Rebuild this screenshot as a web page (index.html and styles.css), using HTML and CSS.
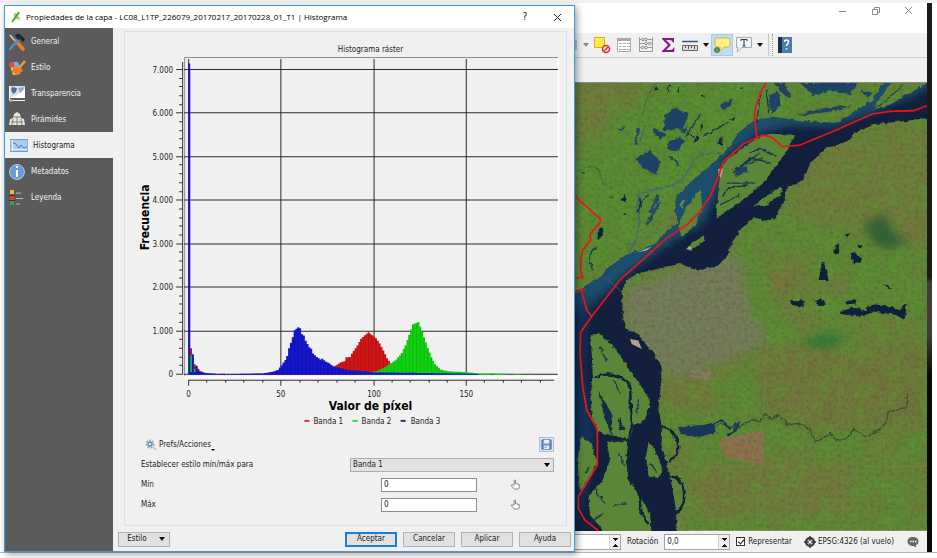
FILE: index.html
```html
<!DOCTYPE html>
<html lang="es">
<head>
<meta charset="utf-8">
<title>Propiedades de la capa</title>
<link rel="stylesheet" href="styles.css">
</head>
<body>
<div class="desktop">
  <section class="dialog" aria-label="Propiedades de la capa">
    <header class="dialog-title">
      <svg class="app-icon" viewBox="0 0 10 12"><path d="M1 11L4 6L3 1.500L6 3L9 1L7 5L9 8L5 8Z" fill="#8fc657"/><path d="M1 11L8 1" stroke="#4d9b2c" stroke-width="1.500"/><path d="M2 4L4 6M6 7l3 3" stroke="#d9d65b"/></svg>
      <h1>Propiedades de la capa - LC08_L1TP_226079_20170217_20170228_01_T1 | Histograma</h1>
      <button class="title-button" aria-label="Contexto">?</button>
      <button class="title-button" aria-label="Cerrar"><svg viewBox="0 0 9 9"><path d="M1 1l7 7M8 1l-7 7" stroke="#222" fill="none"/></svg></button>
    </header>
    <div class="dialog-body">
      <nav class="sidebar">
        <a href="#general"><svg viewBox="0 0 18 18"><path d="M2 2l5 6" stroke="#c9d4dd" stroke-width="1.500"/><path d="M8 8l7 8" stroke="#e8812b" stroke-width="3.500" stroke-linecap="round"/><path d="M12 5L2 16" stroke="#4e8ccb" stroke-width="2.500" stroke-linecap="round"/><path d="M7 2q4-3 7 1l3 3-2 3-3-3-2 1z" fill="#222a31"/></svg>General</a>
        <a href="#estilo"><svg viewBox="0 0 18 18"><path d="M1 4l9-1 2 12-7 1z" fill="#e9d46c"/><path d="M1 4l5-1 1 5-5 1z" fill="#d94d3d"/><path d="M6 3l4 0 1 5-4 0z" fill="#7faede"/><path d="M5 9l7-2 3 5-6 4-5-3z" fill="#e87e25"/><path d="M11 9l6-7" stroke="#f0a12e" stroke-width="2.500"/></svg>Estilo</a>
        <a href="#transparencia"><svg viewBox="0 0 18 18"><path d="M1 1h16v12H1z" fill="#d4e2ef"/><path d="M4 2l5 1-1 4-3 2-2-4z" fill="#506c8c"/><path d="M10 3l6-1v6l-4 0z" fill="#8eabc8"/><path d="M3 12q8-1 14-9v10H3z" fill="#fff"/><path d="M1.500 1v14M1 15.500h16" stroke="#f0f3f6"/><circle cx="3" cy="15.500" r="1.500" fill="#86aed6"/></svg>Transparencia</a>
        <a href="#piramides"><svg viewBox="0 0 18 18"><path d="M6 3l3-2 3 2 1 5H5zM2 8l3-1h8l3 1 1 6H1z" fill="#e3e3df"/><path d="M5 8l-1 6M9 5v9M13 8l1 6M3 11h12M6 6h6" stroke="#85857f" fill="none"/></svg>Pirámides</a>
        <a href="#histograma" class="current" aria-current="page"><svg viewBox="0 0 18 18"><path d="M0 2.500h18v12H0z" fill="#a9cdea" stroke="#6d9fc8"/><path d="M2.500 3v11M1 12.500h16" stroke="#e3f0fa" fill="none"/><path d="M3 6l3 1 3 4 2-3 3 3 3-1" stroke="#4d80ab" fill="none"/></svg>Histograma</a>
        <a href="#metadatos"><svg viewBox="0 0 18 18"><circle cx="9" cy="9" r="7.500" fill="#6c9cd2" stroke="#adc9e8"/><path d="M9 7v7M9 3v2" stroke="#fff" stroke-width="2"/></svg>Metadatos</a>
        <a href="#leyenda"><svg viewBox="0 0 18 18"><path d="M2 1h4v4H2z" fill="#f4b72c"/><path d="M2 7h4v4H2z" fill="#df3f25"/><path d="M2 12h4v4H2z" fill="#36a25a"/><path d="M1 6.500h6M1 11.500h6" stroke="#333"/><path d="M8 4h5M8 9.500h7M8 15h4" stroke="#b7b7b7"/></svg>Leyenda</a>
      </nav>
      <main class="content">
        <div class="panel">
          <svg class="chart" viewBox="125 31 440 402" role="img" aria-label="Histograma ráster">
            <g id="grid"></g>
            <g id="bars"></g>
            <g id="axes"></g>
            <text x="370" y="51" class="tick middle">Histograma ráster</text>
            <text x="370" y="408" class="axis-title middle">Valor de píxel</text>
            <text transform="translate(149 216) rotate(-90)" class="axis-title middle">Frecuencia</text>
            <path d="M304 419h5" stroke="#d2383c" stroke-width="2"/><text x="313" y="422" class="tick">Banda 1</text>
            <path d="M352 419h5" stroke="#38d848" stroke-width="2"/><text x="361" y="422" class="tick">Banda 2</text>
            <path d="M400 419h5" stroke="#2c2ca6" stroke-width="2"/><text x="410" y="422" class="tick">Banda 3</text>
          </svg>
          <div class="form">
            <div class="row">
              <button class="prefs"><svg viewBox="0 0 12 12"><circle cx="5" cy="5" r="3.500" fill="#dce8f3" stroke="#8fabc6" stroke-width="2" stroke-dasharray="2 1"/><circle cx="5" cy="5" r="2" fill="none" stroke="#426c96"/><path d="M8 8l3 3" stroke="#c3ccd4" stroke-width="2"/></svg>Prefs/Acciones<span class="corner"></span></button>
              <button class="save" aria-label="Guardar"><svg viewBox="0 0 12 12"><path d="M1 1h10v10H1z" fill="#6e91b5" stroke="#3f658c"/><path d="M3 1h6v4H3zM3 7h6v4H3z" fill="#e3edf5"/><path d="M4 9h2" stroke="#4c6d90"/></svg></button>
            </div>
            <div class="row">
              <label for="band">Establecer estilo mín/máx para</label>
              <span class="select"><select id="band"><option>Banda 1</option><option>Banda 2</option><option>Banda 3</option></select></span>
            </div>
            <div class="row">
              <label for="min">Mín</label>
              <span class="field"><input id="min" value="0"><button aria-label="Elegir mínimo"><svg viewBox="0 0 12 12"><path d="M4.500 7V1.500q1-1 1.500 0V5l4 1v4l-1 1H5L1 7q1-1.500 3 0" fill="#fff" stroke="#777"/></svg></button></span>
            </div>
            <div class="row">
              <label for="max">Máx</label>
              <span class="field"><input id="max" value="0"><button aria-label="Elegir máximo"><svg viewBox="0 0 12 12"><path d="M4.500 7V1.500q1-1 1.500 0V5l4 1v4l-1 1H5L1 7q1-1.500 3 0" fill="#fff" stroke="#777"/></svg></button></span>
            </div>
          </div>
        </div>
        <footer class="actions">
          <button class="push menu">Estilo<span class="arrow"></span></button>
          <button class="push primary">Aceptar</button>
          <button class="push">Cancelar</button>
          <button class="push">Aplicar</button>
          <button class="push">Ayuda</button>
        </footer>
      </main>
    </div>
  </section>

  <section class="app" aria-label="Ventana de mapa">
    <header class="app-title">
      <button aria-label="Minimizar"><svg viewBox="0 0 9 9"><path d="M1 5.500h7" stroke="#888"/></svg></button>
      <button aria-label="Restaurar"><svg viewBox="0 0 9 9"><path d="M1.500 3.500h5v5h-5zM3.500 3V1.500h5v5H7" fill="none" stroke="#888"/></svg></button>
      <button aria-label="Cerrar ventana"><svg viewBox="0 0 9 9"><path d="M1 1l7 7M8 1l-7 7" stroke="#888"/></svg></button>
    </header>
    <div class="toolbar">
      <i class="sliver"></i>
      <span class="arrow dim"></span>
      <button aria-label="Deseleccionar"><svg viewBox="0 0 18 18"><path d="M1.500 1.500h10v10h-10z" fill="#ffe944" stroke="#d3b120"/><circle cx="13" cy="13" r="3.500" fill="#fbe4e4" stroke="#cf3239" stroke-width="1.500"/><path d="M11 15l4-4" stroke="#cf3239" stroke-width="1.500"/></svg></button>
      <button aria-label="Tabla de atributos"><svg viewBox="0 0 18 18"><path d="M2.500 2.500h13v13h-13z" fill="#fff" stroke="#aaa"/><path d="M3 4h12" stroke="#aaa" stroke-width="2"/><path d="M4 7.500h3M8 7.500h3M12 7.500h3M4 10.500h3M8 10.500h3M12 10.500h3M4 13.500h3M8 13.500h3M12 13.500h3" stroke="#aaa"/></svg></button>
      <button aria-label="Calculadora de campos"><svg viewBox="0 0 18 18"><path d="M2.500 1v15M15.500 1v15M2 3.500h14M2 7.500h14M2 11.500h14M2 15.500h14" stroke="#999" fill="none"/><g fill="#f4f4f4" stroke="#8b8b8b"><circle cx="6" cy="3.500" r="1.300"/><circle cx="9" cy="3.500" r="1.300"/><circle cx="9" cy="7.500" r="1.300"/><circle cx="12.500" cy="7.500" r="1.300"/><circle cx="5.500" cy="11.500" r="1.300"/><circle cx="9" cy="11.500" r="1.300"/></g></svg></button>
      <button aria-label="Estadísticas"><svg viewBox="0 0 18 18"><path d="M3 2h12v4.500h-1Q13.500 4 11 4H7l5 5-5 5h4q3 0 3.500-2.500h1L15 16H3v-1l6-6-6-6z" fill="#8a128a"/></svg></button>
      <button aria-label="Medir"><svg viewBox="0 0 18 18"><path d="M1 5.500h16" stroke="#2f5a87" stroke-width="1.500"/><path d="M1.500 9.500h15v5h-15z" fill="#ddd" stroke="#666"/><path d="M4.500 10v2M7.500 10v3M10.500 10v2M13.500 10v3" stroke="#555"/></svg></button>
      <span class="arrow"></span>
      <button class="active" aria-label="Avisos del mapa"><svg viewBox="0 0 18 18"><path d="M3 2h12q2 0 2 2v5q0 2-2 2h-4l-4 4v-4H4q-2 0-2-2V4q0-2 1-2z" fill="#fff184" stroke="#cfb543"/><circle cx="4" cy="14" r="2.500" fill="#6f9a58" stroke="#507344"/></svg></button>
      <button aria-label="Anotación de texto"><svg viewBox="0 0 18 18"><path d="M1.500 1.500h15v10H7L2 16l1-4.500H1.500z" fill="#eef5fb" stroke="#a1acb5"/><path d="M6 5V3.500h6V5M9 4v6M7.500 10h3" fill="none" stroke="#333"/></svg></button>
      <span class="arrow"></span>
      <i class="grip"></i>
      <button aria-label="Ayuda"><svg viewBox="0 0 18 18"><path d="M2 1h14v16H2z" fill="#4b7cae"/><path d="M2 1h4v16H2z" fill="#1d3147"/><path d="M8.500 6q0-2 2-2t2 2q0 1-1 2t-1 2M10.500 12v1.500" fill="none" stroke="#fff" stroke-width="1.500"/></svg></button>
    </div>
    <div class="subbar"></div>
    <svg class="map" viewBox="15 10 1055 1342" preserveAspectRatio="xMidYMid slice" role="img" aria-label="Imagen satelital del río">
      <defs>
        <filter id="brown" x="0" y="0" width="100%" height="100%" color-interpolation-filters="sRGB"><feTurbulence type="fractalNoise" baseFrequency=".008 .01" numOctaves="6" seed="8"/><feColorMatrix values="0 0 0 0 .47  0 0 0 0 .45  0 0 0 0 .25  3 0 0 0 -1.200"/></filter>
        <filter id="grain" x="0" y="0" width="100%" height="100%" color-interpolation-filters="sRGB"><feTurbulence type="fractalNoise" baseFrequency=".09" numOctaves="3" seed="3"/><feColorMatrix values="0 0 0 0 .2  0 0 0 0 .3  0 0 0 0 .12  0 2.200 0 0 -.95"/></filter>
        <filter id="bright" x="0" y="0" width="100%" height="100%" color-interpolation-filters="sRGB"><feTurbulence type="fractalNoise" baseFrequency=".02" numOctaves="5" seed="21"/><feColorMatrix values="0 0 0 0 .36  0 0 0 0 .6  0 0 0 0 .19  0 0 3 0 -1.300"/></filter>
        <filter id="rough" x="-5%" y="-5%" width="110%" height="110%" color-interpolation-filters="sRGB"><feTurbulence type="fractalNoise" baseFrequency=".07" numOctaves="3" seed="5"/><feDisplacementMap in="SourceGraphic" scale="12" xChannelSelector="R" yChannelSelector="G"/></filter>
        <filter id="soft" x="-30%" y="-30%" width="160%" height="160%"><feGaussianBlur stdDeviation="18"/></filter>
        <filter id="haze" x="-30%" y="-30%" width="160%" height="160%"><feGaussianBlur stdDeviation="12"/></filter>
        <clipPath id="river"><path d="M1090 0L1010 45L960 75L908 92L925 60L968 0H945L905 62L850 100L795 130L700 125L610 112L550 125L510 155L470 210L420 260L370 300L320 350L315 390L325 430L290 455L250 495L180 520L110 565L95 590L0 645V1372H320L318 1290L300 1190L290 1145L275 1100V1035L265 990L272 920L275 860L245 810L200 760L165 748L158 700L155 640L165 605L200 582L270 565L330 552L380 572L440 560L470 530L490 480L520 440L550 412L580 422L612 418L640 370L650 325L700 300L720 250L770 205L830 185L860 155L920 132L1000 125L1090 112Z"/></clipPath>
      </defs>
      <rect x="15" y="10" width="1055" height="1342" fill="#5f8637"/>
      <g filter="url(#soft)">
        <path d="M15 10h150l-30 180L15 250z" fill="#70793f"/>
        <path d="M700 230l370-80v330l-200-20-200-60z" fill="#6e7c3e"/>
        <path d="M560 800l500 0v220l-300 40-180-60z" fill="#6f763d"/>
        <path d="M280 880l140-10 10 100-150 30zM350 1150h500v160H380z" fill="#70793e"/>
        <path d="M590 560l120-10-20 80-90 10z" fill="#77723f"/>
      </g>
      <rect x="15" y="10" width="1055" height="1342" filter="url(#brown)" opacity=".5"/>
      <path d="M15 200L200 60 330 10H900L600 130 400 300 180 500 15 610z" fill="#568d33" opacity=".65" filter="url(#soft)"/>
      <rect x="15" y="10" width="1055" height="1342" filter="url(#bright)" opacity=".45"/>
      <path d="M175 625l150-50 180-50 40 180 50 80-130 60-160 50-120-130-20-60z" fill="#7d7868" opacity=".72" filter="url(#haze)"/>
      <g fill="none" stroke="#8f8a7b" stroke-width="3" opacity=".35"><path d="M180 650L470 690M190 700L480 760M200 620L420 820M300 580L280 760M400 580L370 850M460 570L450 720"/></g>
      <path d="M880 430l60-25 30 50 40 30-50 25-50-20z" fill="#285b36" opacity=".8" filter="url(#haze)"/>
      <path d="M690 790l80-30 60 20-70 25z" fill="#22723b" opacity=".8" filter="url(#haze)"/>
      <path d="M445 1080l135-30 2 105-120-25z" fill="#936e51" opacity=".85"/>
      <path d="M360 870h65l-5 35-60-15z" fill="#877d62" opacity=".8"/>
      <rect x="15" y="10" width="1055" height="1342" filter="url(#grain)" opacity=".28"/>
      <g fill="none" stroke="#8a995b" stroke-width="2" opacity=".3"><path d="M600 660L560 1350M710 820L690 1350M820 1010V1350M930 930L960 1350M400 1160H1070M340 1260H1070M200 640L480 610 650 850M400 560L520 840M700 400L850 700M560 700L1070 650M820 740L800 1050"/></g>
      <g filter="url(#rough)">
        <g clip-path="url(#river)">
          <rect x="0" y="0" width="1090" height="1372" fill="#121f3d"/>
          <path d="M1150 -60L1070 30 900 100 790 140 640 142 560 165 465 240 445 330 400 430 300 490 160 590 80 665 0 700V400L250 300 300 200 500 0z" fill="#1b4d6c" filter="url(#haze)"/>
          <path d="M15 630l60 30-25 90-5 120 30 190-20 150-40 150z" fill="#153a5d" opacity=".7" filter="url(#haze)"/>
        </g>
        <g fill="#5b8537">
          <path d="M560 175L600 162 675 165 650 215 580 310 520 360 437 418 448 300 460 250 490 225z"/>
          <path d="M390 328L397 385 370 440 335 472 325 440 345 390z"/>
          <path d="M632 322L635 340 590 375 550 382 580 355zM405 465L400 485 365 510 348 508 365 488zM333 362l10-2-4 25-8-5z"/>
          <path d="M62 770L85 758 130 800 180 870 235 950 238 1000 215 1030 190 1032 180 1080 120 1070 85 1055 65 1010 62 940 68 880z"/>
          <path d="M110 1085H175L168 1140 175 1200 200 1235 240 1300 245 1372H110L60 1300 55 1250 95 1205 120 1140z"/>
          <path d="M35 1070L65 1090 80 1150 55 1200 30 1232 22 1140z"/>
          <path d="M235 1088L250 1100 275 1160 270 1195 235 1190 228 1130z"/>
        </g>
        <g fill="#1d4263">
          <path d="M285 105l25-20 45 15-15 45-60 10zM245 145l45 20-20 15zM330 150l25-10-10 20zM195 235l45-25 30 35-10 40-40-20zM295 185l35-15 15 15-25 30-28-5zM450 75l40-20-10 25-25 10zM140 148l20-5 3 10z"/>
          <path d="M598 45l28-8 5 40-25 25-8-20zM610 10h35l20 45-20-5zM690 10h170l-20 35-60-15-50 20zM500 268l30-10 5 20-40 10zM670 110l90-25 90-8-60 18zM870 30l40 10-20 15z"/>
          <path d="M320 1042l50-5 60-5 10 25-55 15-50-10z" fill="#173658"/>
          <path d="M85 930l15 30 25 40v70l-20-55zM145 1010l20 40-15 0z" fill="#14284b"/>
          <path d="M240 400l25-55M230 435l40-70M195 195l10-50" stroke="#20466b" stroke-width="8"/>
        </g>
        <g fill="#10203a">
          <path d="M755 550l10 0 10 55-30-5zM795 500l10-12 2 35-15-5zM845 518l10 0 20 25-25 8-8-15zM820 465l20-5-5 12zM860 495l14 2-5 10zM660 660l40 3 0 20-35-8zM735 665l15-10 18 15-25 9zM825 665l30-8 3 14-30 3zM805 700l40-18 40 8 20-18 60 10 20 8 25-20-7 50-25-15-70-10-25 15-55-5zM935 615l15 0 15 15z"/>
          <path d="M250 35l8-15 5 8zM320 35l7-15-2 20zM80 465l15-25 8 8-15 35zM370 190l12-30 4 20zM440 190l20-20-5 25zM120 355l8-7v10zM155 408l10-8 3 8zM35 280l9-4-2 8zM395 55l6-10 3 5zM510 25l5-8 2 12zM480 120l15-8-5 12zM390 155l4-25 5 10zM160 340l10 30-15-10zM210 350l6 35-12-10z"/>
        </g>
        <g fill="none" stroke="#17364b" stroke-width="4">
          <path d="M70 570Q45 520 80 500M205 400Q210 360 235 345M325 260Q320 235 290 230M300 15q-8 8-4 18M345 175L390 105M400 170l80-45M350 155l25 20M570 40l-10 90M590 30l5 70"/>
          <path d="M75 892q65-25 105 25l5 120-10 45-70-18M215 1030q20-15 23-45M275 1040q45 10 50 60 0 30-30 45M300 1190q40 0 42 60 0 35-25 50M210 1240l0 50 25 45" stroke="#10203f" stroke-width="7"/>
          <path d="M490 280l50-45 65 15M470 310h85M455 350l20-25 60-10M540 220l30-15 50 25M510 260l60-40M450 375l60-30M485 270l90-35"/>
          <path d="M90 800l20 45M130 900l20 40M90 1250l15 20M130 1280l40-12M75 1225l10 25M145 1120l20 40M60 1330l40-30M45 1180l15-20M240 1150l20 25M90 970l30 50M205 960l-5 40"/>
        </g>
        <path d="M175 520Q215 460 205 420T210 340Q270 325 310 315T370 235Q410 218 455 220" fill="none" stroke="#456b69" stroke-width="5"/>
        <path d="M215 110q15-70 45-100M30 275q50-30 60 10t35 40M225 135l-15 50" fill="none" stroke="#3c6840" stroke-width="3"/>
        <path d="M430 1045l20-15 30 10 25 5 20-15 20-10 25 5 15-25 20 20 20-15 30 30 30-5 15 5 20 15 15 35 25-10 20-15 15 20 35-5 20-30 35 25 35-15 25-25 10-35 30-5 25-10V940" fill="none" stroke="#35502f" stroke-width="4"/>
        <path d="M430 1030l25-10 20 25 30-15-10 25-25 10" fill="none" stroke="#173658" stroke-width="6"/>
        <path d="M915 85Q960 55 1000 15" stroke="#26404c" fill="none" stroke-width="3"/>
      </g>
      <path d="M444 268l15-2-6 28-8-8zM200 517l45-17-15 12zM348 508l12-10 6 12zM180 777l25 5 10 25-30-15z" fill="#b5a18f"/>
      <path d="M105 592L155 635" stroke="#47617a" stroke-width="2"/>
      <g class="boundary">
        <path d="M587 10Q550 70 554 120L560 175"/>
        <path d="M1070 78L1030 93 960 95 905 103 800 150 690 196 637 201 605 173 578 166 520 192 458 248 445 290 420 350 385 400 350 435 290 475 150 600 65 710 32 757 30 820 38 920 50 990 82 1048V1155L55 1200 25 1250 25 1285 45 1320 85 1352"/>
        <path d="M15 350L92 418 90 430 60 463 62 480 38 512 33 540 32 575 38 592 15 596M15 637L45 629 35 632 50 690 65 710"/>
      </g>
    </svg>
    <footer class="status">
      <span class="spin scale"><input aria-label="Escala" value=""><i></i></span>
      <label for="rotation">Rotación</label>
      <span class="spin"><input id="rotation" value="0,0"><i></i></span>
      <label class="check"><input type="checkbox" checked>Representar</label>
      <button class="crs"><svg viewBox="0 0 12 12"><circle cx="6" cy="6" r="4" fill="#bbb" stroke="#333" stroke-width="2"/><path d="M6 0v12M0 6h12" stroke="#333" stroke-width="1.500"/><circle cx="6" cy="6" r="1.500" fill="#eee"/></svg>EPSG:4326 (al vuelo)</button>
      <button class="messages" aria-label="Mensajes"><svg viewBox="0 0 12 12"><path d="M6 1c3.500 0 5.500 2 5.500 4.500 0 2-1 3-2.500 3.500v2.500L6.500 10C3 10 .5 8 .5 5.500S2.500 1 6 1z" fill="#666"/><path d="M3 5.500h1.500M5.500 5.500H7M8 5.500h1.500" stroke="#fff" stroke-width="1.500"/></svg></button>
    </footer>
  </section>
  <div class="edge"></div>
</div>
<script src="chart.js"></script>
</body>
</html>
```
FILE: styles.css
```css
* { box-sizing: border-box; }
body {
  margin: 0;
  min-height: 100vh;
  background: #fff;
  color: #1c1c1c;
  font: 8px/12px "DejaVu Sans Condensed", "DejaVu Sans", sans-serif;
}
button, input, select { font: inherit; color: inherit; margin: 0; padding: 0; }
button { border: 0; background: none; display: inline-flex; align-items: center; justify-content: center; }
svg { display: block; }

.desktop {
  display: grid;
  grid-template-columns: minmax(0, 571fr) minmax(0, 352fr) 5px;
  min-height: calc(100vh - 6px);
  padding: 3px 5px 0 4px;
  background: linear-gradient(#f1f1f1 3px, #fff 3px);
  border-bottom: 1px solid #aeb4ba;
}
.edge { background: linear-gradient(#1d1919 0 50%, #463b3c 51% 60%, #0b0909 68%); }

/* Layer properties dialog */
.dialog {
  display: flex;
  flex-direction: column;
  margin-top: 2px;
  background: #f0f0f0;
  border: 1px solid #3f9bdc;
  box-shadow: 2px 2px 7px rgba(0, 0, 0, .4);
  z-index: 1;
}
.dialog-title { display: flex; align-items: center; height: 22px; padding: 0 12px 0 6px; background: #fff; }
.dialog-title h1 { flex: 1; margin: 0 0 0 5px; font: 8px/12px "Open Sans", sans-serif; color: #000; white-space: nowrap; }
.app-icon { width: 10px; height: 12px; }
.title-button { width: 10px; height: 12px; margin-left: 22px; font-size: 10px; }
.title-button svg { width: 9px; height: 9px; }
.dialog-body { display: flex; flex: 1; }
.sidebar { width: 108px; background: #5b5b5b; }
.sidebar a { display: flex; align-items: center; gap: 5px; height: 26px; padding: 2px 0 0 3px; color: #f2f2f2; text-decoration: none; }
.sidebar svg { width: 18px; height: 18px; }
.sidebar .current { padding-left: 5px; background: #f0f0f0; color: #1c1c1c; }
.content { flex: 1; display: flex; flex-direction: column; min-width: 0; padding: 3px 3px 4px 5px; }
.panel { flex: 1; margin: 0 4px 0 6px; border: 1px solid #dfdfdf; }
.chart { width: 100%; }
.tick { font-size: 8px; fill: #1c1c1c; }
.axis-title { font: bold 12px "DejaVu Sans Condensed", sans-serif; fill: #000; }
.middle { text-anchor: middle; }
.end { text-anchor: end; }

.form { padding: 0 12px 9px 16px; }
.row { display: flex; align-items: center; justify-content: space-between; height: 20px; }
.prefs { gap: 2px; margin-left: 4px; }
.prefs svg { width: 12px; height: 12px; }
.corner { align-self: flex-end; margin-left: -2px; border: 2px solid transparent; border-top-color: #000; border-bottom: 0; }
.save { width: 15px; height: 15px; border: 1px solid #a9c0d5; background: #d9e5f0; }
.save svg { width: 11px; height: 11px; }
.select { position: relative; width: 204px; }
.select select { display: block; width: 100%; height: 14px; padding-left: 2px; appearance: none; border: 1px solid #adadad; border-radius: 0; background: #e2e2e2; }
.select::after { content: ""; position: absolute; right: 4px; top: 5px; border: 3px solid transparent; border-top: 4px solid #000; border-bottom: 0; }
.field { display: grid; grid-template-columns: 96px 1fr; width: 204px; padding-left: 31px; }
.field input { height: 14px; width: 100%; padding-left: 2px; border: 1px solid #8c8c8c; background: #fff; }
.field svg { width: 11px; height: 11px; }

.actions { display: flex; gap: 6px; margin-top: 6px; }
.push { width: 52px; height: 15px; border: 1px solid #b2b2b2; background: #e1e1e1; }
.push.menu { margin-right: auto; padding-left: 4px; gap: 12px; }
.push.primary { border: 2px solid #1a7fd4; }
.arrow { flex: none; border: 3px solid transparent; border-top: 4px solid #111; border-bottom: 0; }
.arrow.dim { border-top-color: #888; }

/* Map window */
.app { display: flex; flex-direction: column; min-width: 0; background: #f0f0f0; }
.app-title { display: flex; justify-content: flex-end; gap: 24px; height: 30px; padding: 3px 14px 0 0; background: #fff; }
.app-title button { width: 9px; height: 9px; }
.app-title svg { width: 9px; height: 9px; }
.toolbar { display: flex; align-items: center; height: 25px; border-bottom: 1px solid #cacaca; }
.toolbar button { width: 22px; height: 22px; flex: none; }
.toolbar .active { background: #bfdcf3; border: 1px solid #a4cdec; }
.toolbar svg { width: 18px; height: 18px; }
.toolbar .arrow { margin: 0 2px; }
.sliver { width: 2px; height: 10px; margin-right: 4px; background: #b3c8da; }
.grip { height: 22px; margin: 0 1px 0 3px; border-left: 1px solid #c9c9c9; border-right: 1px dotted #999; width: 5px; }
.subbar { height: 25px; border-bottom: 1px solid #888; }
.map { flex: 1; width: 100%; min-height: 0; }
.boundary { fill: none; stroke: #ee1418; stroke-width: 5; stroke-linejoin: round; }
.status { display: flex; align-items: center; height: 21px; padding: 1px 8px 0 0; white-space: nowrap; }
.spin { display: flex; width: 66px; height: 16px; margin: 0 6px; border: 1px solid #a5a5a5; background: #fff; }
.spin.scale { width: 46px; margin: 0 6px 0 0; border-left: 0; }
.spin input { flex: 1; min-width: 0; border: 0; padding-left: 2px; background: none; }
.spin i { width: 11px; border-left: 1px solid #d0d0d0; background:
  conic-gradient(from 135deg at 50% 0, #111 90deg, transparent 0) 50% 9px / 5px 3px no-repeat,
  conic-gradient(from -45deg at 50% 100%, #111 90deg, transparent 0) 50% 3px / 5px 3px no-repeat, #eee; }
.check { display: flex; align-items: center; gap: 3px; }
.check input { position: relative; appearance: none; width: 9px; height: 9px; border: 1px solid #333; background: #fff; }
.check input:checked::after { content: ""; position: absolute; left: 2px; top: 0; width: 3px; height: 5px; border: solid #222; border-width: 0 1px 1px 0; transform: rotate(40deg); }
.crs { gap: 2px; margin-left: 12px; }
.crs svg, .messages svg { width: 12px; height: 12px; }
.messages { margin-left: auto; }
```
FILE: chart.js
```js
const X0 = 189, Y0 = 373, UNIT = 1.845, SCALE = 0.04345;
const px = v => X0 + v * UNIT;
const py = n => Y0 - n * SCALE;

// Control points [pixel value, count]; counts between them are interpolated.
const bands = [
  { color: '#cf1518', line: '#a50e10', points: [[0,7000],[1,610],[2,400],[3,240],[6,80],[10,30],[14,30],[15,0],[17,25],[19,25],[20,0],[31,0],[32,20],[60,30],[74,120],[78,190],[80,230],[82,290],[84,310],[85,400],[87,410],[89,550],[91,670],[93,830],[95,910],[97,975],[99,910],[101,840],[103,720],[105,560],[107,380],[109,260],[112,120],[118,30],[122,0]] },
  { color: '#12cf12', line: '#0ca50c', points: [[0,500],[1,440],[2,180],[5,40],[12,20],[15,0],[92,0],[96,50],[102,90],[106,180],[109,260],[112,350],[115,500],[117,680],[119,920],[121,1160],[124,1210],[125,1100],[127,860],[129,620],[131,400],[133,240],[136,120],[140,80],[150,60],[156,30],[171,25],[172,0],[175,0],[176,20],[179,20],[180,0],[183,0],[184,25],[185,0]] },
  { color: '#1616cc', line: '#0d0d9e', points: [[0,7150],[1,60],[2,470],[3,60],[4,210],[5,90],[8,40],[14,20],[20,8],[27,20],[40,30],[45,70],[48,110],[50,220],[52,340],[53,430],[54,610],[56,860],[57,1020],[59,1090],[60,1070],[61,930],[62,900],[63,780],[65,630],[66,600],[67,490],[69,410],[71,350],[72,370],[74,300],[76,260],[78,190],[82,150],[86,110],[95,80],[100,55],[130,40],[156,20],[157,0],[163,0],[164,20],[165,0]] }
];

function countAt(points, v) {
  for (let i = 1; i < points.length; i++) {
    const [a, m] = points[i - 1], [b, n] = points[i];
    if (v >= a && v <= b) return m + (n - m) * (v - a) / (b - a);
  }
  return 0;
}

let bars = '';
for (const band of bands) {
  let fill = '', lines = '';
  for (let v = 0; v < 190; v++) {
    const n = countAt(band.points, v);
    if (n < 5) continue;
    fill += `M${px(v - 0.5).toFixed(2)} ${Y0}V${py(n).toFixed(2)}h${UNIT + 0.1}V${Y0}z`;
    if (v % 2) lines += `M${px(v).toFixed(2)} ${Y0}V${(py(n) + 1).toFixed(2)}`;
  }
  bars += `<path d="${fill}" fill="${band.color}"/><path d="${lines}" stroke="${band.line}" stroke-width=".5"/>`;
}
document.getElementById('bars').innerHTML = bars;

let grid = '', ticks = '', labels = '';
for (let n = 0; n <= 7000; n += 200) {
  const y = Math.round(py(n)) - 0.5, major = n % 1000 === 0;
  ticks += `M${major ? 176 : 179} ${y}H182`;
  if (major) {
    grid += `M184 ${y}H557`;
    labels += `<text class="tick end" x="173" y="${y + 3}">${n ? n / 1000 + '.000' : '0'}</text>`;
  }
}
for (let v = 0; v <= 190; v += 10) {
  const x = Math.round(px(v)) - 0.5, major = v % 50 === 0;
  ticks += `M${x} 378V${major ? 384 : 381}`;
  if (major) {
    grid += `M${x} 58V373`;
    labels += `<text class="tick middle" x="${x}" y="395">${v}</text>`;
  }
}
document.getElementById('grid').innerHTML =
  `<path d="M184.500 374V56.500H557" fill="none" stroke="#8f8f8f"/><path d="M557.500 57V375.500H185" fill="none" stroke="#fff" stroke-width="2"/><path d="${grid}" stroke="#2b2b2b"/>`;
document.getElementById('axes').innerHTML =
  `<path d="M182.500 61V373M188 378.500H553${ticks}" stroke="#333" fill="none"/>${labels}`;
```
